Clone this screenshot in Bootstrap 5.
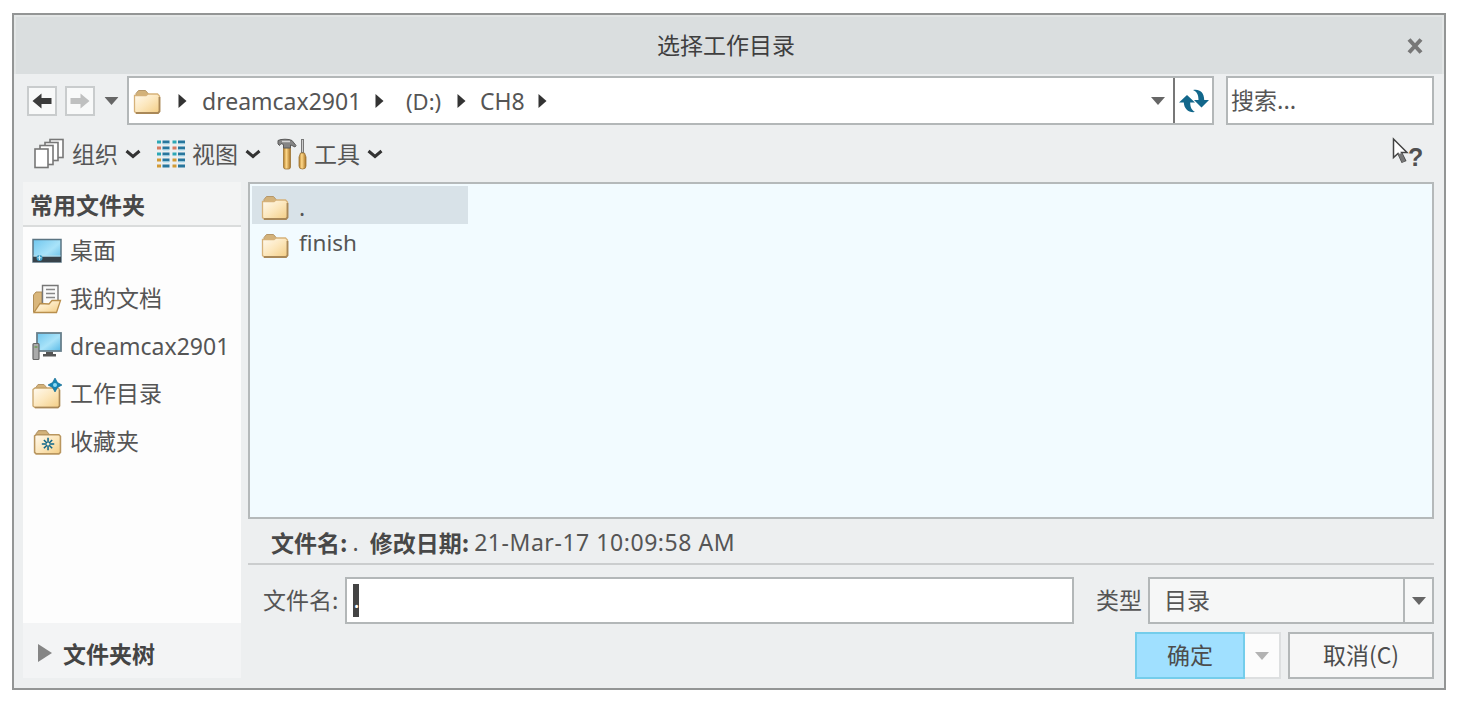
<!DOCTYPE html>
<html lang="zh">
<head>
  <meta charset="UTF-8">
  <title>选择工作目录</title>
  <link href="https://cdn.jsdelivr.net/npm/bootstrap@5.3.0/dist/css/bootstrap.min.css" rel="stylesheet">
  <style>
    body { background: #fff; overflow: hidden; font-family: "Noto Sans", "Noto Sans CJK SC", sans-serif; font-size: 23px; line-height: 30px; color: #555; }
    svg { display: block; flex: none; }
    .cjk { font-family: "Noto Sans CJK SC", sans-serif; }
    .dialog { width: 1434px; height: 677px; margin: 13px 0 0 12px; border: 2px solid #939595; background: #edeff0; }
    .title-bar { height: 59px; padding: 0 6px 3px 0; background: #dadedf; color: #3f3f3f; border: 2px solid #e3e6e6; border-width: 2px 2px 0; }
    .title-bar .close-x { position: absolute; right: 19px; top: 21px; }

    .path-row { height: 49px; margin: 2px 10px 0 13px; }
    .nav-btn { width: 30px; height: 30px; border: 2px solid #c9cccd; background: #f8f9f9; }
    .nav-btn.back { color: #3b3b3b; }
    .nav-btn.forward { color: #bfc0c0; margin-left: 8px; }
    .nav-more { margin-left: 9px; }
    .drop-mark { color: #666; }
    .box { border: 2px solid #b3b7b8; background: #fff; }
    .path-box { width: 1087px; height: 49px; margin-left: 8px; }
    .path-box .root { margin: 2px 17px 0 4px; }
    .path-box .drop-mark { margin-right: 8px; }
    .crumb-user { width: 158px; margin: 0 15px; }
    .crumb-drive { width: 37px; margin: 0 14px 0 22px; font-size: 22px; }
    .crumb-dir { width: 46px; margin: 0 12px 0 14px; }
    .path-box .refresh { width: 39px; border-left: 2px solid #777; }
    .search-box { width: 208px; height: 49px; padding: 0 0 4px 3px; }

    .tool-row { height: 57px; padding: 1px 20px 1px 20px; }
    .tool-row span { margin: 0 7px 2px; }
    .tool-row .chev { margin-right: 16px; }
    .side { width: 218px; height: 496px; margin-left: 9px; background: #fdfdfd; }
    .side-head { height: 45px; padding: 0 0 0 7px; background: #f3f4f4; border-bottom: 2px solid #dadcdc; color: #484848; }
    .side-item { height: 47.7px; padding-left: 9px; gap: 8px; }
    .side-item .cjk { margin-bottom: 3px; }
    .side-foot { height: 55px; padding: 5px 0 0 15px; background: #f3f4f5; gap: 11px; color: #444; }

    .main { margin-left: 7px; width: 1186px; }
    .files { height: 337px; background: #f2fbff; border: 2px solid #b5b9ba; padding: 2px; }
    .file-item { width: 216px; height: 37px; padding-left: 9px; gap: 10px; }
    .file-item svg { margin-top: 6px; }
    .file-item.current { height: 38px; background: #d8e2e8; }
    .file-item.current span { padding-top: 4px; }
    .file-item:not(.current) span { font-size: 22.5px; }
    .info { height: 46px; padding: 2px 0 0 23px; border-bottom: 2px solid #cbcdce; }
    .info b { color: #484848; }
    .info .cur { margin: 0 11px 0 5px; }
    .info .stamp { margin-left: 5px; padding-bottom: 1px; letter-spacing: .55px; }
    .name-row { height: 47px; margin-top: 12px; padding-left: 15px; }
    .name-row .cjk { padding-bottom: 3px; }
    .name-box { width: 729px; height: 47px; margin-left: 7px; padding-left: 6px; }
    .name-box span { width: 6px; height: 33px; background: #444; color: #fff; line-height: 30px; }
    .type-label { padding-right: 0; }
    .type-box { width: 286px; height: 47px; margin-left: 6px; padding-left: 14px; background: #f6f7f7; }
    .type-box .drop { width: 29px; border-left: 2px solid #b3b7b8; }
    .btn-row { margin-top: 8px; }
    .dlg-btn { height: 47px; padding: 0 0 4px; border: 2px solid #b3b7b8; border-radius: 0; background: #f7f7f7; font-size: 23px; line-height: 30px; color: #4c4c4c; }
    .dlg-btn.ok { width: 110px; background: #a0e0ff; border-color: #74cdeb; }
    .dlg-btn.more { width: 36px; padding: 0; background: #fcfcfc; border-color: #dddfe0; border-left: 0; color: #b3b3b3; }
    .dlg-btn.cancel { width: 146px; margin-left: 7px; }
  </style>
</head>
<body>
  <svg width="0" height="0" class="position-absolute">
    <defs>
      <linearGradient id="g-folder" x1="0" y1="0" x2="1" y2="1">
        <stop offset="0" stop-color="#fffaf0"/><stop offset=".5" stop-color="#fce7bd"/><stop offset="1" stop-color="#f3cd84"/>
      </linearGradient>
      <linearGradient id="g-screen" x1="0" y1="0" x2="1" y2="1">
        <stop offset="0" stop-color="#6fc6ee"/><stop offset=".55" stop-color="#a9e3f9"/><stop offset="1" stop-color="#58b9e6"/>
      </linearGradient>
      <linearGradient id="g-wood" x1="0" y1="0" x2="1" y2="0">
        <stop offset="0" stop-color="#b17a26"/><stop offset=".4" stop-color="#ffd98a"/><stop offset="1" stop-color="#a87122"/>
      </linearGradient>
      <symbol id="i-folder" viewBox="0 0 28 26">
        <path d="M3 8V4.500L5.500 1.500H12.500L15.500 5V8z" fill="#d3b27a" stroke="#b5976a"/>
        <path d="M1.500 6.500H13l2-1.500H24.500L26.500 7V22.500L25 24H3L1.500 22.500z" fill="url(#g-folder)" stroke="#d6b27a" stroke-width="1.300"/>
        <path d="M3 24H25L26.500 22.500V8" fill="none" stroke="#a98858" stroke-width="1.800"/>
      </symbol>
      <symbol id="i-right" viewBox="0 0 9 14"><path d="M.5 0L8.500 7L.5 14z" fill="#333"/></symbol>
      <symbol id="i-down" viewBox="0 0 14 8"><path d="M0 0H14L7 8z" fill="currentColor"/></symbol>
      <symbol id="i-chev" viewBox="0 0 16 10"><path d="M1.500 2L8 7.500L14.500 2" fill="none" stroke="#333" stroke-width="3"/></symbol>
      <symbol id="i-arrow" viewBox="0 0 20 16"><path d="M.5 8L9.500 .5V5H19.500V11H9.500V15.500z" fill="currentColor"/></symbol>
    </defs>
  </svg>

  <div class="dialog d-flex flex-column">
    <div class="title-bar position-relative d-flex flex-shrink-0 align-items-center justify-content-center cjk">
      <span>选择工作目录</span>
      <svg class="close-x" width="16" height="16" viewBox="0 0 16 16"><path d="M2 1.500L14 14.500M14 1.500L2 14.500" stroke="#777" stroke-width="4"/></svg>
    </div>

    <!-- address and search -->
    <div class="path-row d-flex flex-shrink-0 align-items-center">
      <div class="nav-btn back d-flex align-items-center justify-content-center"><svg width="20" height="16"><use href="#i-arrow"/></svg></div>
      <div class="nav-btn forward d-flex align-items-center justify-content-center"><svg width="20" height="16"><use href="#i-arrow" transform="matrix(-1 0 0 1 20 0)"/></svg></div>
      <svg class="nav-more drop-mark" width="15" height="8" viewBox="0 0 14 8"><use href="#i-down"/></svg>
      <div class="path-box box d-flex">
        <div class="d-flex align-items-center flex-grow-1">
          <svg class="root" width="28" height="26"><use href="#i-folder"/></svg>
          <svg width="9" height="14"><use href="#i-right"/></svg>
          <span class="crumb-user">dreamcax2901</span>
          <svg width="9" height="14"><use href="#i-right"/></svg>
          <span class="crumb-drive text-nowrap">(D:)</span>
          <svg width="9" height="14"><use href="#i-right"/></svg>
          <span class="crumb-dir">CH8</span>
          <svg width="9" height="14"><use href="#i-right"/></svg>
          <svg class="ms-auto drop-mark" width="14" height="8"><use href="#i-down"/></svg>
        </div>
        <div class="refresh d-flex align-items-center justify-content-center">
          <svg width="30" height="24" viewBox="0 0 30 24" fill="#12678b">
            <path d="M0 13.500L8 6L16 13.500H11.200C11.200 18 12.500 21 16 23C10 24 5 20 4.800 13.500z"/>
            <path d="M14 1C20 -.5 25.200 3 25.200 11H30L22.500 18.500L15 11H19.500C19.500 6 18 2.500 14 1z"/>
          </svg>
        </div>
      </div>
      <div class="search-box box ms-auto d-flex align-items-center cjk">搜索<span>...</span></div>
    </div>

    <!-- toolbar -->
    <div class="tool-row d-flex flex-shrink-0 align-items-center cjk">
      <svg width="31" height="31" viewBox="0 0 31 31" fill="#fff" stroke="#777" stroke-width="1.600">
        <rect x="16" y="1.500" width="13" height="18"/><rect x="11" y="4.500" width="13" height="18"/>
        <rect x="6" y="7.500" width="13" height="19"/><rect x="1" y="11" width="13" height="18.500"/>
      </svg>
      <span>组织</span>
      <svg class="chev" width="16" height="10"><use href="#i-chev"/></svg>
      <svg width="28" height="28" viewBox="0 0 28 28" stroke-width="3" fill="none">
        <path d="M5.500 2H12.500M21 2H28M5.500 8H12.500M21 8H28M5.500 14H12.500M21 14H28M5.500 20H12.500M21 20H28M5.500 26H12.500M21 26H28" stroke="#28769d"/>
        <path d="M6 4H12M21.500 4H27.500M6 10H12M21.500 10H27.500M6 16H12M21.500 16H27.500M6 22H12M21.500 22H27.500" stroke="#a9e0f2" stroke-width="1"/>
        <path d="M0 2H4M15.500 2H19.500M0 14H4M15.500 14H19.500" stroke="#2ca7b5"/>
        <path d="M0 8H4M15.500 8H19.500" stroke="#d77b61"/>
        <path d="M0 20H4M15.500 20H19.500M0 26H4M15.500 26H19.500" stroke="#d29a35"/>
      </svg>
      <span>视图</span>
      <svg class="chev" width="16" height="10"><use href="#i-chev"/></svg>
      <svg width="30" height="32" viewBox="0 0 30 32">
        <rect x="6.500" y="8" width="7" height="23" rx="2" fill="url(#g-wood)" stroke="#9c7435" stroke-width=".8"/>
        <path d="M1 6V2.500C4 .8 12 .8 15 2.500L19 7.500L18 9L14 7H13.500V10H6.500V6.500L4 5.500L2.500 7.500z" fill="#858585" stroke="#595959"/>
        <path d="M5 3.500H13" stroke="#d5d5d5" stroke-width="1.500"/>
        <path d="M25.500 1V16" stroke="#777" stroke-width="3"/>
        <path d="M25.500 2V14" stroke="#ccc"/>
        <path d="M23.500 15H27.500L29 19V28Q29 31 25.500 31T22 28V19z" fill="url(#g-wood)" stroke="#9c7435" stroke-width=".8"/>
      </svg>
      <span>工具</span>
      <svg class="chev" width="16" height="10"><use href="#i-chev"/></svg>
      <svg class="ms-auto" width="32" height="34" viewBox="0 0 32 34">
        <path d="M1.500 2V20.500L6 16.500L10 25L13.500 23.500L9.500 15.500H15z" fill="#fff" stroke="#444" stroke-width="1.500"/>
        <path d="M6 17L10 25.500L13.500 24L10 16" fill="#777"/>
        <text x="16" y="28.500" font-family="Liberation Sans, sans-serif" font-size="25" font-weight="bold" fill="#505050">?</text>
      </svg>
    </div>

    <div class="d-flex flex-grow-1">
      <!-- common folders -->
      <div class="side d-flex flex-column">
        <div class="side-head d-flex align-items-center fw-bold cjk">常用文件夹</div>
        <div class="side-item d-flex align-items-center">
          <svg width="30" height="26" viewBox="0 0 30 26"><rect x="1" y="1.500" width="28" height="22.500" fill="url(#g-screen)" stroke="#5b7482" stroke-width="1.500"/><path d="M1 18.500H29V24H1z" fill="#37424a"/><path d="M1.500 18H28.500" stroke="#b8dce9"/><circle cx="7.500" cy="20" r="3" fill="#3d9fc8"/><path d="M7.500 17.500V22M5.500 19.800H9.500" stroke="#ccecf8"/></svg>
          <span class="cjk">桌面</span>
        </div>
        <div class="side-item d-flex align-items-center">
          <svg width="30" height="30" viewBox="0 0 30 30"><path d="M1.500 28V11L4 8H10V28z" fill="#d9b67b" stroke="#b08e58"/><path d="M10.500 1.500H26V22H10.500z" fill="#fafafa" stroke="#777" stroke-width="1.400"/><path d="M14 5.500H23M14 9.500H23M14 13.500H23" stroke="#888" stroke-width="1.400"/><path d="M2 28.500L8 19.500L17 20L20 16.500H28.500L24.500 28.500z" fill="url(#g-folder)" stroke="#b98f4d" stroke-width="1.300"/></svg>
          <span class="cjk">我的文档</span>
        </div>
        <div class="side-item d-flex align-items-center">
          <svg width="30" height="30" viewBox="0 0 30 30"><rect x="5" y="2" width="24" height="18" fill="url(#g-screen)" stroke="#687f8b" stroke-width="1.800"/><path d="M14 21H21V23H24V25.500H11V23H14z" fill="#555"/><rect x="1" y="12.500" width="6" height="16" rx="1" fill="#aaa" stroke="#666" stroke-width="1.200"/><path d="M2.500 16H5.500" stroke="#6b9c54" stroke-width="1.500"/></svg>
          <span>dreamcax2901</span>
        </div>
        <div class="side-item d-flex align-items-center">
          <svg width="30" height="32" viewBox="0 0 30 32"><path d="M3.500 10L6 6.500H12L15 10z" fill="#d3b27a" stroke="#b5976a"/><path d="M1 11.500L3 10H26L27.500 11.500V28L26 29.500H3L1 28z" fill="url(#g-folder)" stroke="#c9a56b" stroke-width="1.300"/><path d="M3 29.500H26L27.500 28V12" fill="none" stroke="#a98858" stroke-width="1.500"/><path d="M23 0L25.500 4.500L30 7L25.500 9.500L23 14L20.500 9.500L16 7L20.500 4.500z" fill="#1685b4" stroke="#0d6389" stroke-width=".6"/><circle cx="23" cy="7" r="2" fill="#8edbf4"/></svg>
          <span class="cjk">工作目录</span>
        </div>
        <div class="side-item d-flex align-items-center">
          <svg width="30" height="28" viewBox="-1 -1 29 27"><path d="M3 8V4.500L5.500 1.500H12.500L15.500 5V8z" fill="#d3b27a" stroke="#b5976a"/><path d="M1.500 6.500L3 5.500H25L26.500 7V22.500L25 24H3L1.500 22.500z" fill="url(#g-folder)" stroke="#b9965f" stroke-width="1.500"/><path d="M14.500 8.500V20.500M8.500 14.500H20.500M10.500 10.500L18.500 18.500M18.500 10.500L10.500 18.500" stroke="#0f6589" stroke-width="1.500"/><circle cx="14.500" cy="14.500" r="1.500" fill="#fff0cf"/></svg>
          <span class="cjk">收藏夹</span>
        </div>
        <div class="side-foot mt-auto d-flex align-items-center fw-bold cjk">
          <svg width="14" height="18" viewBox="0 0 14 18"><path d="M0 0L14 9L0 18z" fill="#858585"/></svg>
          <span>文件夹树</span>
        </div>
      </div>

      <div class="main">
        <div class="files">
          <div class="file-item current d-flex align-items-center">
            <svg width="28" height="26"><use href="#i-folder"/></svg><span>.</span>
          </div>
          <div class="file-item d-flex align-items-center">
            <svg width="28" height="26"><use href="#i-folder"/></svg><span>finish</span>
          </div>
        </div>
        <div class="info d-flex align-items-center">
          <b class="cjk">文件名:</b><span class="cur">.</span><b class="cjk">修改日期:</b><span class="stamp">21-Mar-17 10:09:58 AM</span>
        </div>
        <div class="name-row d-flex align-items-center">
          <span class="cjk">文件名:</span>
          <div class="name-box box d-flex align-items-center"><span>.</span></div>
          <span class="type-label cjk ms-auto">类型</span>
          <div class="type-box box d-flex">
            <span class="cjk flex-grow-1 align-self-center">目录</span>
            <div class="drop drop-mark d-flex align-items-center justify-content-center"><svg width="14" height="8"><use href="#i-down"/></svg></div>
          </div>
        </div>
        <div class="btn-row d-flex justify-content-end">
          <button class="btn dlg-btn ok cjk">确定</button>
          <button class="btn dlg-btn more d-flex align-items-center justify-content-center"><svg width="14" height="8"><use href="#i-down"/></svg></button>
          <button class="btn dlg-btn cancel cjk">取消(C)</button>
        </div>
      </div>
    </div>
  </div>
  <script src="https://cdn.jsdelivr.net/npm/bootstrap@5.3.0/dist/js/bootstrap.bundle.min.js"></script>
</body>
</html>
